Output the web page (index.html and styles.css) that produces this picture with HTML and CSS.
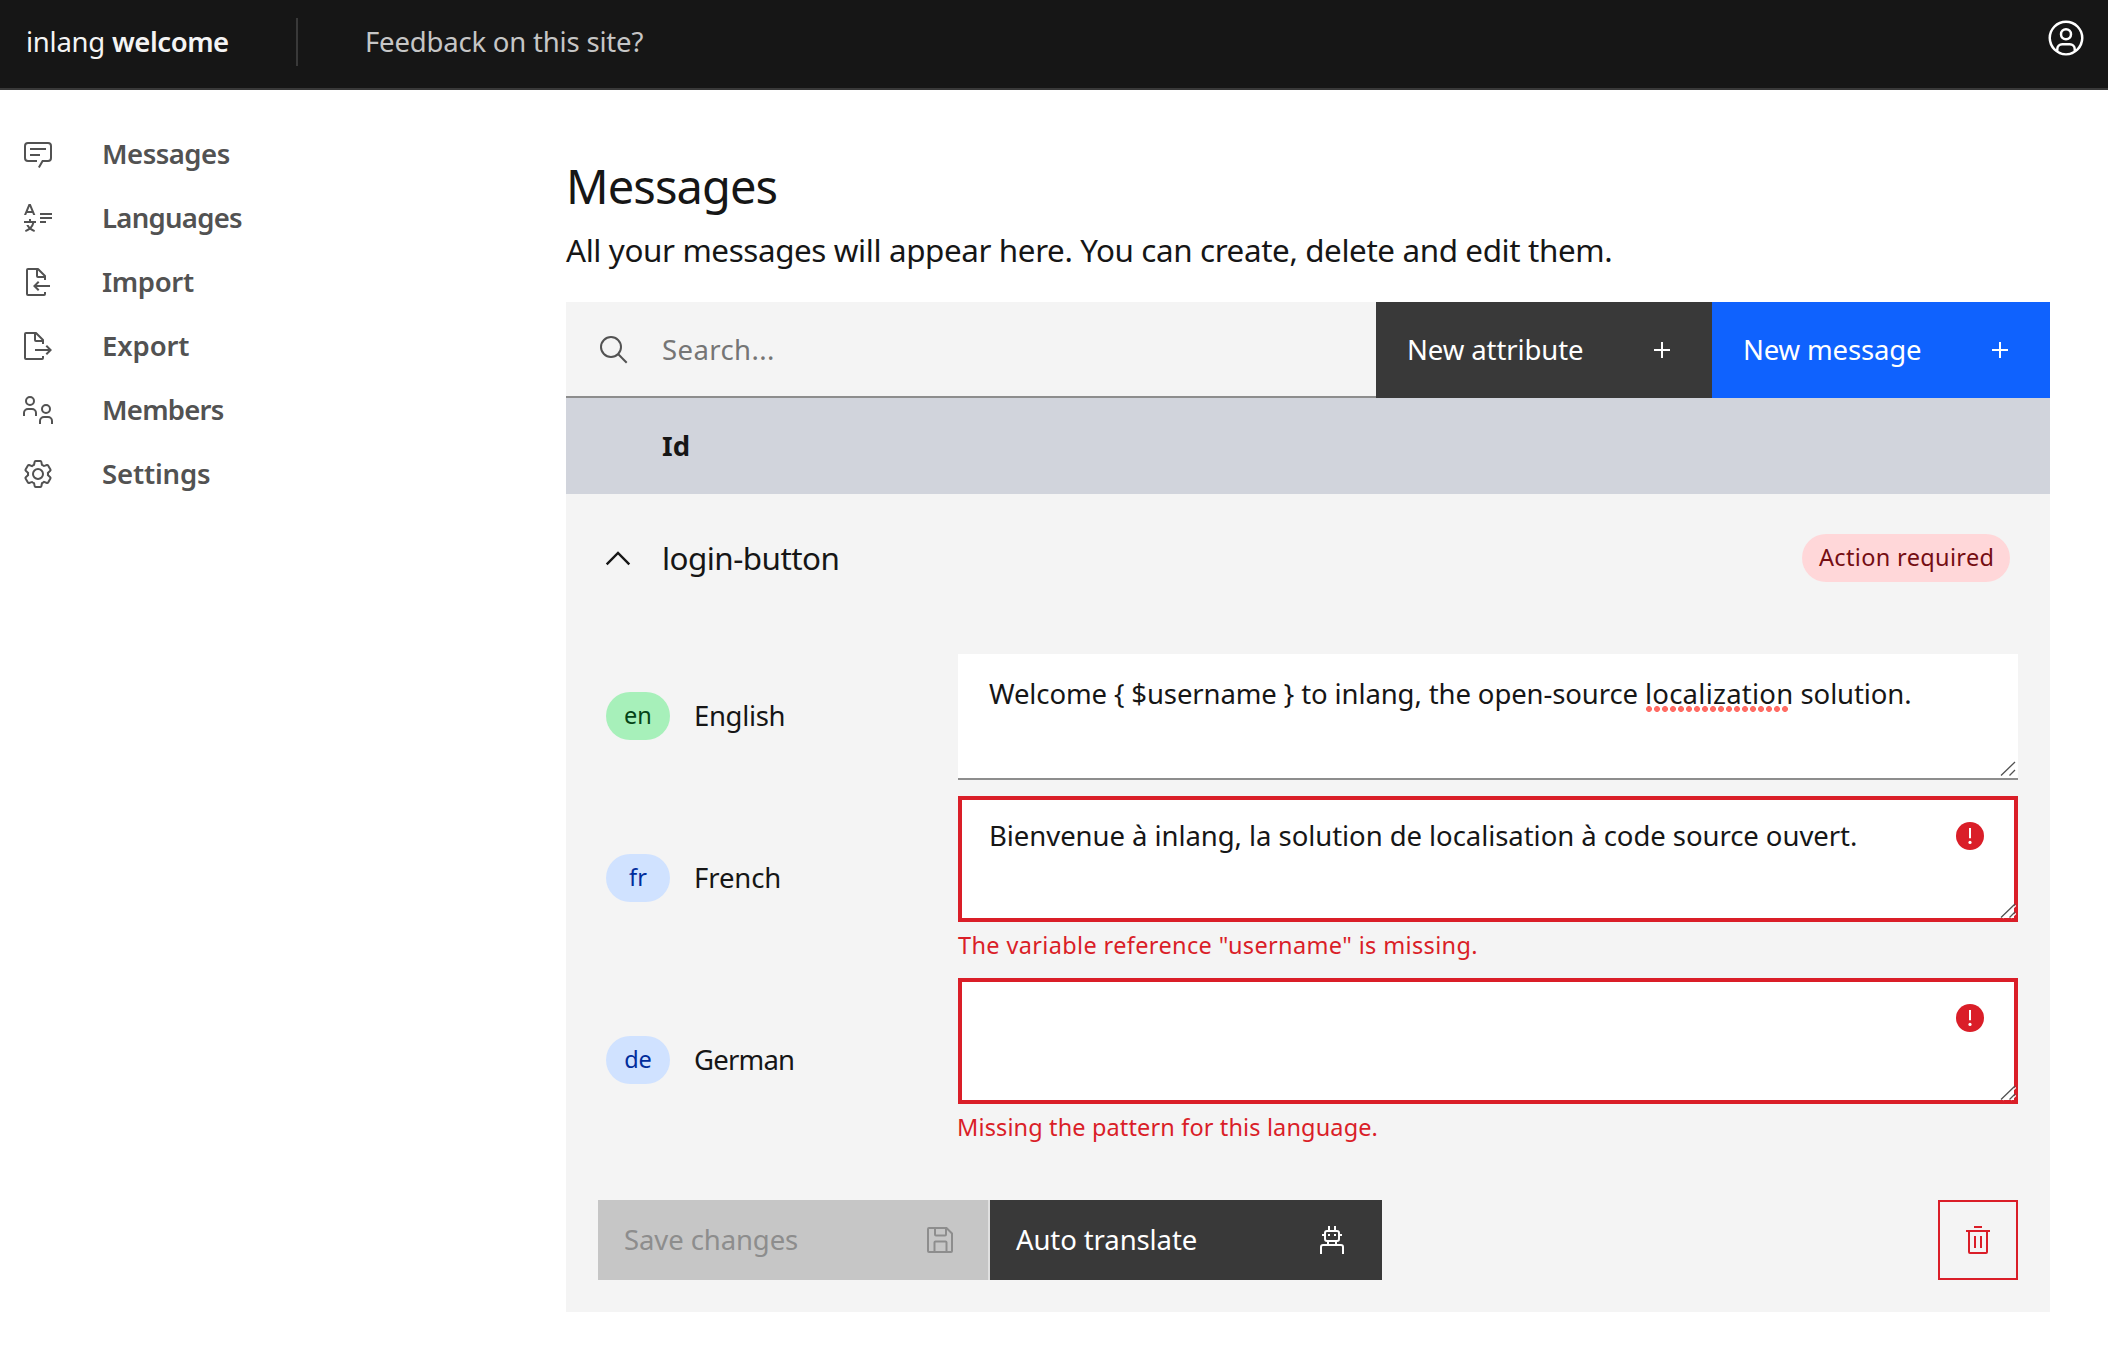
FILE: index.html
```html
<!DOCTYPE html>
<html lang="en">
<head>
<meta charset="utf-8">
<title>inlang</title>
<link rel="stylesheet" href="styles.css">
</head>
<body>
<header class="header">
  <div class="brand"><span class="brand-name">inlang</span> <b class="brand-project">welcome</b></div>
  <div class="header-divider"></div>
  <a class="header-link">Feedback on this site?</a>
  <svg class="avatar" viewBox="0 0 32 32"><path d="M16,8a5,5,0,1,0,5,5A5,5,0,0,0,16,8Zm0,8a3,3,0,1,1,3-3A3.0034,3.0034,0,0,1,16,16Z"/><path d="M16,2A14,14,0,1,0,30,16,14.0158,14.0158,0,0,0,16,2ZM10,26.3765V25a3.0033,3.0033,0,0,1,3-3h6a3.0033,3.0033,0,0,1,3,3v1.3765a11.8989,11.8989,0,0,1-12,0Zm13.9925-1.4507A5.0016,5.0016,0,0,0,19,20H13a5.0016,5.0016,0,0,0-4.9925,4.9258,12,12,0,1,1,15.985,0Z"/></svg>
</header>

<div class="layout">
  <nav class="sidebar">
    <a class="nav-item nav-messages">
      <svg class="icon" viewBox="0 0 32 32"><path d="M17.74,30,16,29l4-7h6a2,2,0,0,0,2-2V8a2,2,0,0,0-2-2H6A2,2,0,0,0,4,8V20a2,2,0,0,0,2,2h9v2H6a4,4,0,0,1-4-4V8A4,4,0,0,1,6,4H26a4,4,0,0,1,4,4V20a4,4,0,0,1-4,4H21.16Z"/><path d="M8 10H24V12H8zM8 16H18V18H8z"/></svg>
      <span>Messages</span>
    </a>
    <a class="nav-item nav-languages">
      <svg class="icon" viewBox="0 0 32 32"><path d="M18 19H24V21H18zM18 15H30V17H18zM18 11H30V13H18zM14 21V19H9V17H7V19H2V21H10.2148A8.5914 8.5914 0 0 1 7.9989 24.9771 9.2731 9.2731 0 0 1 6.5521 23H4.3334A10.8553 10.8553 0 0 0 6.4785 26.2966 14.6584 14.6584 0 0 1 3 28.127L3.7021 30A16.42 16.42 0 0 0 7.9928 27.6638 16.4883 16.4883 0 0 0 12.2979 30L13 28.127A14.664 14.664 0 0 1 9.5228 26.3 10.3132 10.3132 0 0 0 12.2587 21zM11.1666 13H13.333L8.75 2H6.5833L2 13H4.1664L5 11H10.3335zM5.8331 9 7.6665 4.6 9.5 9z"/></svg>
      <span>Languages</span>
    </a>
    <a class="nav-item nav-import">
      <svg class="icon" viewBox="0 0 32 32"><path d="M28 19 14.83 19 17.41 16.41 16 15 11 20 16 25 17.41 23.59 14.83 21 28 21z"/><path d="M24,14V10a1,1,0,0,0-.29-.71l-7-7A1,1,0,0,0,16,2H6A2,2,0,0,0,4,4V28a2,2,0,0,0,2,2H22a2,2,0,0,0,2-2V26H22v2H6V4h8v6a2,2,0,0,0,2,2h6v2Zm-8-4V4.41L21.59,10Z"/></svg>
      <span>Import</span>
    </a>
    <a class="nav-item nav-export">
      <svg class="icon" viewBox="0 0 32 32"><path d="M13 21 26.17 21 23.59 23.59 25 25 30 20 25 15 23.59 16.41 26.17 19 13 19z"/><path d="M22,14V10a1,1,0,0,0-.29-.71l-7-7A1,1,0,0,0,14,2H4A2,2,0,0,0,2,4V28a2,2,0,0,0,2,2H20a2,2,0,0,0,2-2V26H20v2H4V4h8v6a2,2,0,0,0,2,2h6v2Zm-8-4V4.41L19.59,10Z"/></svg>
      <span>Export</span>
    </a>
    <a class="nav-item nav-members">
      <svg class="icon icon-line" viewBox="0 0 32 32"><circle cx="8" cy="7" r="4"/><path d="M2 22V19a4 4 0 0 1 4-4h4a4 4 0 0 1 4 4v3"/><circle cx="24" cy="15" r="4"/><path d="M18 30V27a4 4 0 0 1 4-4h4a4 4 0 0 1 4 4v3"/></svg>
      <span>Members</span>
    </a>
    <a class="nav-item nav-settings">
      <svg class="icon" viewBox="0 0 32 32"><path d="M27,16.76c0-.25,0-.5,0-.76s0-.51,0-.77l1.92-1.68A2,2,0,0,0,29.3,11L26.94,7a2,2,0,0,0-1.73-1,2,2,0,0,0-.64.1l-2.43.82a11.35,11.35,0,0,0-1.31-.75l-.51-2.52a2,2,0,0,0-2-1.61H13.64a2,2,0,0,0-2,1.61l-.51,2.52a11.48,11.48,0,0,0-1.32.75L7.43,6.06A2,2,0,0,0,6.79,6,2,2,0,0,0,5.06,7L2.7,11a2,2,0,0,0,.41,2.51L5,15.24c0,.25,0,.5,0,.76s0,.51,0,.77L3.11,18.45A2,2,0,0,0,2.7,21L5.06,25a2,2,0,0,0,1.73,1,2,2,0,0,0,.64-.1l2.43-.82a11.35,11.35,0,0,0,1.31.75l.51,2.52a2,2,0,0,0,2,1.61h4.72a2,2,0,0,0,2-1.61l.51-2.52a11.48,11.48,0,0,0,1.32-.75l2.42.82a2,2,0,0,0,.64.1,2,2,0,0,0,1.73-1L29.3,21a2,2,0,0,0-.41-2.51ZM25.21,24l-3.43-1.16a8.86,8.86,0,0,1-2.71,1.57L18.36,28H13.64l-.71-3.55a9.36,9.36,0,0,1-2.7-1.57L6.79,24,4.43,20l2.72-2.4a8.9,8.9,0,0,1,0-3.13L4.43,12,6.79,8l3.43,1.16a8.86,8.86,0,0,1,2.71-1.57L13.64,4h4.72l.71,3.55a9.36,9.36,0,0,1,2.7,1.57L25.21,8,27.57,12l-2.72,2.4a8.9,8.9,0,0,1,0,3.13L27.57,20Z"/><path d="M16,22a6,6,0,1,1,6-6A5.94,5.94,0,0,1,16,22Zm0-10a3.91,3.91,0,0,0-4,4,3.91,3.91,0,0,0,4,4,3.91,3.91,0,0,0,4-4A3.91,3.91,0,0,0,16,12Z"/></svg>
      <span>Settings</span>
    </a>
  </nav>

  <main class="content">
    <h1 class="title">Messages</h1>
    <p class="description">All your messages will appear here. You can create, delete and edit them.</p>

    <div class="toolbar">
      <div class="search">
        <svg class="icon icon-line" viewBox="0 0 32 32"><circle cx="13" cy="13" r="10"/><path d="M20.3 20.3 28.7 28.7"/></svg>
        <span class="search-text">Search...</span>
      </div>
      <button class="button tool-button button-dark new-attribute"><span>New attribute</span><svg class="icon" viewBox="0 0 32 32"><path d="M17 15V8H15V15H8V17H15V24H17V17H24V15z"/></svg></button>
      <button class="button tool-button button-primary new-message"><span>New message</span><svg class="icon" viewBox="0 0 32 32"><path d="M17 15V8H15V15H8V17H15V24H17V17H24V15z"/></svg></button>
    </div>

    <div class="table-head"><span>Id</span></div>

    <section class="message">
      <div class="message-head">
        <svg class="chevron" viewBox="0 0 26 16"><path d="M1.7 14.3 13 3 24.3 14.3"/></svg>
        <span class="message-id">login-button</span>
        <span class="tag tag-red">Action required</span>
      </div>

      <div class="row row-en">
        <div class="language"><span class="tag tag-code tag-green">en</span><span class="language-name english">English</span></div>
        <div class="field">
          <div class="textarea"><span class="pattern-en">Welcome { $username } to inlang, the open-source <span class="misspelled">localization</span> solution.</span>
            <svg class="grip" viewBox="0 0 16 16"><path d="M1 14.5 15 1M9.5 14.5 15 9"/></svg>
          </div>
        </div>
      </div>

      <div class="row">
        <div class="language"><span class="tag tag-code tag-blue">fr</span><span class="language-name french">French</span></div>
        <div class="field">
          <div class="textarea invalid"><span class="pattern-fr">Bienvenue à inlang, la solution de localisation à code source ouvert.</span>
            <svg class="warning" viewBox="0 0 28 28"><circle cx="14" cy="14" r="14"/><path d="M13 6H15V16.3H13z"/><circle class="dot" cx="14" cy="20.4" r="1.6"/></svg>
            <svg class="grip" viewBox="0 0 16 16"><path class="halo" d="M2.8 15 16 2.4M11.2 15 16 10.4"/><path d="M1 14.5 15 1M9.5 14.5 15 9"/></svg>
          </div>
          <p class="error error-fr">The variable reference "username" is missing.</p>
        </div>
      </div>

      <div class="row row-de">
        <div class="language"><span class="tag tag-code tag-blue">de</span><span class="language-name german">German</span></div>
        <div class="field">
          <div class="textarea invalid">
            <svg class="warning" viewBox="0 0 28 28"><circle cx="14" cy="14" r="14"/><path d="M13 6H15V16.3H13z"/><circle class="dot" cx="14" cy="20.4" r="1.6"/></svg>
            <svg class="grip" viewBox="0 0 16 16"><path class="halo" d="M2.8 15 16 2.4M11.2 15 16 10.4"/><path d="M1 14.5 15 1M9.5 14.5 15 9"/></svg>
          </div>
          <p class="error error-de">Missing the pattern for this language.</p>
        </div>
      </div>

      <div class="actions">
        <button class="button action-button button-disabled save"><span>Save changes</span><svg class="icon icon-line" viewBox="0 0 32 32"><path d="M5 4H22.5L28 9.5V27a1 1 0 0 1-1 1H5a1 1 0 0 1-1-1V5a1 1 0 0 1 1-1zM11 4v6.5a1 1 0 0 0 1 1h9a1 1 0 0 0 1-1V4M10.5 28V18.5a1 1 0 0 1 1-1h10a1 1 0 0 1 1 1V28"/></svg></button>
        <button class="button action-button button-dark translate"><span>Auto translate</span><svg class="icon icon-line" viewBox="0 0 32 32"><path d="M13 2V7M19 2V7M6 11H9M23 11H26M12 18V21M20 18V21M5 30V23a2 2 0 0 1 2-2H25a2 2 0 0 1 2 2v7"/><rect x="9" y="7" width="14" height="10" rx="2"/><path d="M12 11H14M18 11H20"/></svg></button>
        <button class="delete"><svg class="icon icon-line" viewBox="0 0 32 32"><path d="M12 3H20M4 7H28M7 7V28a1 1 0 0 0 1 1H24a1 1 0 0 0 1-1V7M13 12V24M19 12V24"/></svg></button>
      </div>
    </section>
  </main>
</div>
</body>
</html>
```
FILE: styles.css
```css
* { box-sizing: border-box; }

body {
  margin: 0;
  background: #fff;
  color: #161616;
  font: 400 27.5px/40px "Noto Sans", sans-serif;
  white-space: nowrap;
}

h1, p { margin: 0; font-weight: 400; }

.icon { width: 32px; height: 32px; flex: none; fill: currentColor; }
.icon-line { fill: none; stroke: currentColor; stroke-width: 2; }

/* Header */
.header {
  display: flex;
  align-items: center;
  height: 90px;
  padding: 0 22px 4px 26px;
  background: #161616;
  border-bottom: 2px solid #393939;
  color: #f4f4f4;
}
.brand { width: 270px; letter-spacing: -0.25px; }
.brand-project { font-weight: 600; letter-spacing: -0.45px; }
.header-divider { width: 2px; height: 48px; background: #393939; }
.header-link { margin-left: 67px; color: #c6c6c6; letter-spacing: -0.19px; }
.avatar { width: 40px; height: 40px; margin: 0 0 8px auto; fill: #fff; }

.layout { display: flex; }

/* Sidebar */
.sidebar { width: 566px; padding: 32px 0 0 22px; color: #525252; }
.nav-item { display: flex; align-items: center; gap: 48px; height: 64px; font-weight: 600; }
.nav-messages { letter-spacing: -0.5px; }
.nav-languages { letter-spacing: -0.72px; }
.nav-import { letter-spacing: -0.35px; }
.nav-export { letter-spacing: -0.1px; }
.nav-members { letter-spacing: -0.75px; }
.nav-settings { letter-spacing: -0.15px; }

/* Content */
.content { width: 1484px; padding-top: 64px; }
.title { font-size: 47px; line-height: 64px; letter-spacing: -0.92px; }
.description {
  height: 84px;
  padding-top: 12px;
  font-size: 31.4px;
  letter-spacing: -0.395px;
}

.toolbar { display: flex; height: 96px; }
.search {
  display: flex;
  flex: 1;
  align-items: center;
  gap: 32px;
  padding-left: 32px;
  background: #f4f4f4;
  border-bottom: 2px solid #8d8d8d;
  color: #525252;
}
.search .icon { margin-top: 2px; }
.search-text { padding-top: 2px; color: #757575; letter-spacing: 0.4px; }

.button {
  display: flex;
  align-items: center;
  justify-content: space-between;
  border: 0;
  color: #fff;
  font: inherit;
}
.tool-button { padding: 0 34px 0 31px; }
.button-dark { background: #393939; }
.button-primary { background: #0f62fe; }
.button-disabled { background: #c6c6c6; color: #8d8d8d; }
.new-attribute { width: 336px; letter-spacing: -0.1px; }
.new-message { width: 338px; letter-spacing: -0.15px; }

.table-head {
  height: 96px;
  padding: 28px 0 0 96px;
  background: #d1d4dc;
  font-weight: 700;
}

/* Message card */
.message { height: 818px; padding: 40px 32px 0; background: #f4f4f4; }
.message-head { display: flex; align-items: center; height: 48px; padding: 0 8px 0 7px; }
.chevron { width: 26px; height: 16px; margin: 0 31px 1px 0; fill: none; stroke: #161616; stroke-width: 2.4; }
.message-id { font-size: 31.4px; letter-spacing: -0.53px; }

.tag {
  height: 48px;
  padding: 0 17px;
  border-radius: 24px;
  font-size: 23.5px;
  line-height: 46px;
}
.tag-red { margin-left: auto; width: 208px; background: #ffd7d9; color: #750e13; letter-spacing: 0.34px; }
.tag-code { width: 64px; padding: 0; text-align: center; }
.tag-green { background: #a7f0ba; color: #044317; }
.tag-blue { background: #d0e2ff; color: #002d9c; }

.row { display: flex; height: 164px; margin-top: 16px; }
.row-en { height: 126px; margin-top: 72px; }
.row-de { margin-top: 18px; }
.row-en .language { padding-bottom: 2px; }
.language { display: flex; align-items: center; gap: 24px; width: 360px; padding-left: 8px; }
.english { letter-spacing: -0.35px; }
.french { letter-spacing: -0.1px; }
.german { letter-spacing: -0.8px; }
.field { flex: 1; }

.textarea {
  position: relative;
  height: 126px;
  padding: 20px 31px 0;
  background: #fff;
  border-bottom: 2px solid #8d8d8d;
}
.invalid { padding: 16px 27px 0; border: 4px solid #da1e28; }
.pattern-en { letter-spacing: -0.11px; }
.pattern-fr { letter-spacing: -0.06px; }
.misspelled { position: relative; letter-spacing: 0.25px; }
.misspelled::after {
  content: "";
  position: absolute;
  left: 1px;
  bottom: 0;
  width: 143px;
  height: 6px;
  background: radial-gradient(circle at 3px 3px, #ff6b63 2.6px, transparent 3.3px) 0 0 / 8px 6px;
}
.grip { position: absolute; right: 2px; bottom: 1px; width: 16px; height: 16px; fill: none; stroke: #525252; stroke-width: 1.3; }
.invalid .grip { right: -2px; bottom: -1px; }
.halo { stroke: #fff; }
.warning { position: absolute; top: 22px; right: 30px; width: 28px; height: 28px; fill: #da1e28; }
.warning path, .warning .dot { fill: #fff; }

.error { padding-top: 9px; color: #da1e28; font-size: 23.5px; line-height: 28px; }
.error-fr { letter-spacing: 0.36px; }
.error-de { margin-left: -1px; letter-spacing: 0.13px; }

.actions { display: flex; height: 80px; margin-top: 58px; }
.action-button { padding: 0 32px 0 26px; }
.save { width: 390px; box-shadow: 2px 0 #e0e0e0; letter-spacing: -0.1px; }
.translate { width: 392px; margin-left: 2px; padding-right: 34px; letter-spacing: -0.1px; }
.delete {
  display: flex;
  align-items: center;
  justify-content: center;
  width: 80px;
  margin-left: auto;
  padding: 0;
  background: none;
  border: 2px solid #da1e28;
  color: #da1e28;
}
```
